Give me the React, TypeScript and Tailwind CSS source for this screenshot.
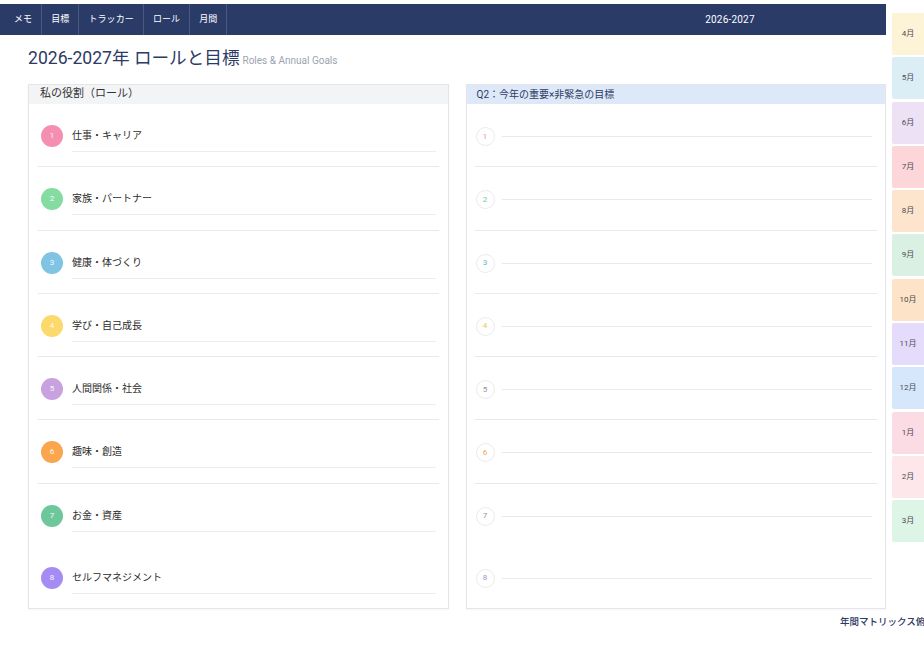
import React from "react";

const navItems = ["メモ", "目標", "トラッカー", "ロール", "月間"];

const roles = [
  { label: "仕事・キャリア", color: "#f48fb1" },
  { label: "家族・パートナー", color: "#84dca0" },
  { label: "健康・体づくり", color: "#7fc4e2" },
  { label: "学び・自己成長", color: "#fdd86a" },
  { label: "人間関係・社会", color: "#c8a2df" },
  { label: "趣味・創造", color: "#f9a64e" },
  { label: "お金・資産", color: "#6dc79a" },
  { label: "セルフマネジメント", color: "#a58cf5" },
];

const goalColors = ["#ee8ea8", "#6fcb92", "#5fbcc4", "#efc94a", "#8f94a6", "#efa55c", "#8f97a0", "#9893cf"];

const months = [
  { label: "4月", bg: "bg-[#fdf3d6]" },
  { label: "5月", bg: "bg-[#dbeef6]" },
  { label: "6月", bg: "bg-[#ece1f5]" },
  { label: "7月", bg: "bg-[#fcd6d9]" },
  { label: "8月", bg: "bg-[#fde4cd]" },
  { label: "9月", bg: "bg-[#d9f0e3]" },
  { label: "10月", bg: "bg-[#fde4c8]" },
  { label: "11月", bg: "bg-[#e5dcfb]" },
  { label: "12月", bg: "bg-[#d7e7fb]" },
  { label: "1月", bg: "bg-[#fcdce4]" },
  { label: "2月", bg: "bg-[#fde7eb]" },
  { label: "3月", bg: "bg-[#ddf5e7]" },
];

export default function App() {
  return (
    <div className="w-[924px] h-[660px] overflow-hidden bg-white flex font-['Roboto','Noto_Sans_CJK_JP',sans-serif]">
      <div className="w-[886px] shrink-0 flex flex-col">
        {/* nav */}
        <div className="mt-[4px] h-[31px] bg-[#2a3b68] flex items-stretch text-white">
          {navItems.map((n) => (
            <div
              key={n}
              className="px-[9px] first:pl-[14px] flex items-center border-r border-white/15 text-[9px] tracking-[0.1px]"
            >
              {n}
            </div>
          ))}
          <div className="ml-auto w-[312px] flex items-center justify-center text-[10px] tracking-[0.2px]">
            2026-2027
          </div>
        </div>

        {/* title */}
        <div className="mt-[11px] pl-[28px] flex items-baseline h-[24px]">
          <h1 className="text-[17.6px] leading-[24px] text-[#2d3a63]">2026-2027年 ロールと目標</h1>
          <span className="ml-[3px] text-[10px] text-[#9ca3af]">Roles &amp; Annual Goals</span>
        </div>

        {/* panels */}
        <div className="mt-[14px] pl-[28px] grid grid-cols-2 gap-[17px] h-[525px]">
          <div className="border border-[#e3e5e8] flex flex-col shadow-[0_1px_2px_rgba(0,0,0,0.04)]">
            <div className="h-[19px] bg-[#f3f4f6] flex items-center pl-[11px] text-[11px] text-[#333]">
              私の役割（ロール）
            </div>
            <div className="flex-1 flex flex-col">
              {roles.map((r, i) => (
                <div key={r.label} className={`flex-1 mx-[9px] ${i < 6 ? "border-b border-[#e8e9eb]" : ""}`}>
                  <div className="flex items-start pl-[3px] pr-[3px] pt-[21px]">
                    <div
                      className="w-[22px] h-[22px] rounded-full shrink-0 flex items-center justify-center text-white/90 text-[8px]"
                      style={{ backgroundColor: r.color }}
                    >
                      {i + 1}
                    </div>
                    <div className="ml-[9px] flex-1 h-[27px] border-b border-[#ececee] pt-[4px] text-[10px] leading-[14px] text-[#2b2b2b]">
                      {r.label}
                    </div>
                  </div>
                </div>
              ))}
            </div>
          </div>

          <div className="border border-[#e3e5e8] flex flex-col shadow-[0_1px_2px_rgba(0,0,0,0.04)]">
            <div className="h-[19px] bg-[#dde9f8] flex items-center pl-[10px] text-[10px] text-[#2d3a63]">
              Q2：今年の重要×非緊急の目標
            </div>
            <div className="flex-1 flex flex-col">
              {goalColors.map((c, i) => (
                <div key={i} className={`flex-1 mx-[8px] ${i < 6 ? "border-b border-[#e8e9eb]" : ""}`}>
                  <div className="flex items-center pl-[1px] pr-[5px] pt-[23px]">
                    <div
                      className="w-[19px] h-[19px] rounded-full shrink-0 border border-[#ebebee] flex items-center justify-center text-[8px]"
                      style={{ color: c }}
                    >
                      {i + 1}
                    </div>
                    <div className="ml-[7px] flex-1 border-b border-[#e8e9eb]" />
                  </div>
                </div>
              ))}
            </div>
          </div>
        </div>

        {/* footer */}
        <div className="mt-[7px] pl-[840px] whitespace-nowrap text-[9.5px] leading-[12px] font-medium text-[#2d3a63]">
          年間マトリックス俯瞰
        </div>
      </div>

      {/* month tabs */}
      <div className="ml-[6px] w-[32px] shrink-0 pt-[13px] flex flex-col gap-[2.3px]">
        {months.map((m) => (
          <div
            key={m.label}
            className={`h-[42px] rounded-l-[2px] flex items-center justify-center text-[8px] text-[#4b4b55] ${m.bg}`}
          >
            {m.label}
          </div>
        ))}
      </div>
    </div>
  );
}
